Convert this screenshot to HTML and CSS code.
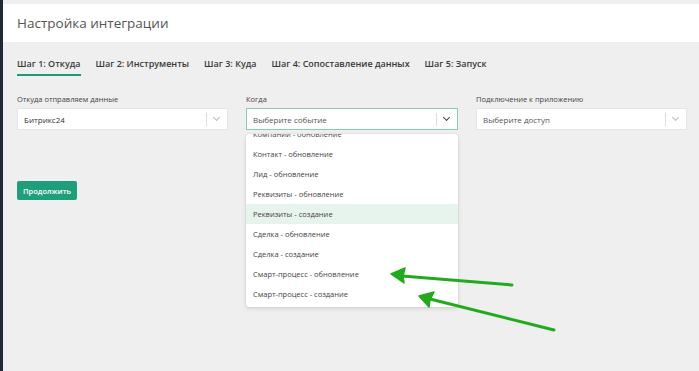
FILE: index.html
```
<!DOCTYPE html>
<html lang="ru">
<head>
    <meta charset="UTF-8">
    <title>Настройка интеграции</title>
    <link rel="stylesheet" href="styles.css">
</head>
<body>
<div class="page">
    <!-- шапка -->
    <div class="header">
        <h1 class="title">Настройка интеграции</h1>
    </div>

    <!-- шаги -->
    <div class="tabs">
        <span class="tab active">Шаг 1: Откуда</span>
        <span class="tab">Шаг 2: Инструменты</span>
        <span class="tab">Шаг 3: Куда</span>
        <span class="tab">Шаг 4: Сопоставление данных</span>
        <span class="tab">Шаг 5: Запуск</span>
    </div>

    <!-- поля -->
    <div class="fields">
        <div class="field">
            <div class="label">Откуда отправляем данные</div>
            <div class="select">
                <span class="value">Битрикс24</span>
                <span class="sep"></span>
                <span class="chevron"></span>
            </div>
        </div>
        <div class="field">
            <div class="label">Когда</div>
            <div class="select open">
                <span class="value muted">Выберите событие</span>
                <span class="sep"></span>
                <span class="chevron"></span>
            </div>
            <div class="menu">
                <div class="menu-list">
                    <div class="option">Компании - обновление</div>
                    <div class="option">Контакт - обновление</div>
                    <div class="option">Лид - обновление</div>
                    <div class="option">Реквизиты - обновление</div>
                    <div class="option hover">Реквизиты - создание</div>
                    <div class="option">Сделка - обновление</div>
                    <div class="option">Сделка - создание</div>
                    <div class="option">Смарт-процесс - обновление</div>
                    <div class="option">Смарт-процесс - создание</div>
                </div>
            </div>
        </div>
        <div class="field">
            <div class="label">Подключение к приложению</div>
            <div class="select">
                <span class="value muted">Выберите доступ</span>
                <span class="sep"></span>
                <span class="chevron"></span>
            </div>
        </div>
    </div>

    <button class="next-btn">Продолжить</button>

    <!-- стрелки-пометки -->
    <svg class="arrows" width="699" height="371" viewBox="0 0 699 371">
        <g fill="#22a91c" stroke="#22a91c" stroke-linecap="round">
            <path d="M512 285 L402 276" stroke-width="3" fill="none"/>
            <path d="M391 274 L405 268 L403 276 L404 283 Z" stroke-width="1.5" stroke-linejoin="round"/>
            <path d="M554 330 L430 299" stroke-width="3" fill="none"/>
            <path d="M419 296 L434 292 L430 300 L429 307 Z" stroke-width="1.5" stroke-linejoin="round"/>
        </g>
    </svg>
</div>
</body>
</html>
```

FILE: styles.css
```
body {
    margin: 0;
    font-family: 'Open Sans', 'Noto Sans', sans-serif;
    background-color: #efefef;
    color: #333;
}

.page {
    position: relative;
    width: 699px;
    height: 371px;
    box-sizing: border-box;
    border-left: 3px solid #1e2a36;
    padding-top: 4px;
    overflow: hidden;
    background-color: #efefef;
}

/* шапка */
.header {
    background: #fff;
    height: 38px;
    display: flex;
    align-items: center;
    padding-left: 14px;
}

.title {
    margin: 0;
    font-size: 13.5px;
    font-weight: 400;
    color: #555;
}

/* шаги */
.tabs {
    display: flex;
    gap: 15px;
    padding: 15px 0 0 14px;
}

.tab {
    font-size: 9px;
    font-weight: 600;
    color: #3a3a3a;
    padding-bottom: 4px;
    border-bottom: 2px solid transparent;
}

.tab.active {
    border-bottom-color: #1f9a7a;
}

/* поля */
.fields {
    display: grid;
    grid-template-columns: 211px 212px 211px;
    column-gap: 18px;
    padding: 18px 0 0 14px;
}

.field {
    position: relative;
}

.label {
    font-size: 7.5px;
    color: #444;
    margin-bottom: 3px;
    height: 11px;
}

.select {
    height: 22px;
    background: #fff;
    border: 1px solid #e6e6e6;
    box-sizing: border-box;
    display: flex;
    align-items: center;
    padding-left: 6px;
}

.select.open {
    border-color: #8cc9b4;
}

.value {
    flex: 1;
    font-size: 8px;
    color: #333;
}

.value.muted {
    color: #555;
}

.sep {
    width: 1px;
    height: 13px;
    background: #ddd;
}

.chevron {
    width: 20px;
    height: 20px;
    position: relative;
}

.chevron::after {
    content: '';
    position: absolute;
    left: 7px;
    top: 6px;
    width: 4px;
    height: 4px;
    border-right: 1px solid #bbb;
    border-bottom: 1px solid #bbb;
    transform: rotate(45deg);
}

.select.open .chevron::after {
    border-color: #444;
    border-width: 1.5px;
}

/* выпадающий список */
.menu {
    position: absolute;
    left: 0;
    top: 40px;
    width: 212px;
    height: 173px;
    background: #fff;
    border-radius: 3px;
    box-shadow: 0 0 2px rgba(0,0,0,0.12), 0 2px 4px rgba(0,0,0,0.1);
    overflow: hidden;
    z-index: 5;
}

.menu-list {
    margin-top: -10px;
}

.option {
    height: 20px;
    line-height: 20px;
    padding-left: 7px;
    font-size: 7.5px;
    color: #444;
}

.option.hover {
    background: #e7f4ee;
}

/* кнопка */
.next-btn {
    display: block;
    margin: 51px 0 0 14px;
    background-color: #1f9e7c;
    color: #fff;
    border: none;
    border-radius: 2px;
    font-family: inherit;
    font-size: 7.5px;
    font-weight: 600;
    width: 60px;
    height: 19px;
    padding: 0;
}

.arrows {
    position: absolute;
    left: -3px;
    top: 0;
    z-index: 10;
}
```
